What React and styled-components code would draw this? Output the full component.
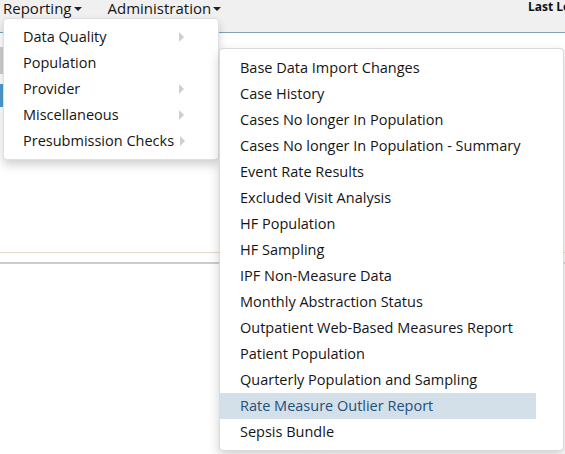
import styled, { createGlobalStyle } from 'styled-components';

const GlobalStyle = createGlobalStyle`
  html, body {
    margin: 0;
    padding: 0;
    background: #ffffff;
    font-family: 'Open Sans', 'Noto Sans', sans-serif;
    color: #151515;
  }
  * {
    box-sizing: border-box;
  }
`;

const Page = styled.div`
  width: 565px;
  height: 454px;
  overflow: hidden;
  position: relative;
`;

const NavBar = styled.div`
  height: 33px;
  background: #f0f0f0;
  border-bottom: 1px solid #7fa3ba;
  display: flex;
  align-items: flex-start;
  padding-left: 3px;
`;

const NavItem = styled.div`
  position: relative;
  font-size: 15px;
  line-height: 16px;
  color: #151515;
  display: flex;
  align-items: center;
  margin-right: ${(props) => props.$gap || 0}px;
`;

const DownCaret = styled.span`
  display: inline-block;
  width: 0;
  height: 0;
  margin-left: 2px;
  margin-top: 2px;
  border-top: 4px solid #222;
  border-left: 4px solid transparent;
  border-right: 4px solid transparent;
`;

// the label runs past the window edge, like in the real app
const LastLogin = styled.div`
  margin-left: auto;
  width: 37px;
  font-size: 12px;
  font-weight: 700;
  line-height: 13px;
  white-space: nowrap;
  color: #111;
`;

const Content = styled.div`
  padding-top: 14px;
`;

const TabStrip = styled.div`
  width: 200px;
  height: 27px;
  background: #cfcfcf;
`;

const SelectedTab = styled.div`
  width: 200px;
  height: 23px;
  margin-top: 10px;
  background: #4b9ad3;
`;

const Rule = styled.div`
  width: 565px;
  height: ${(props) => props.$h}px;
  background: ${(props) => props.$color};
  margin-top: ${(props) => props.$top}px;
`;

const Dropdown = styled.div`
  position: absolute;
  top: 18px;
  left: 0;
  width: 216px;
  padding: 5px 0;
  background: #fff;
  border: 1px solid rgba(0, 0, 0, 0.12);
  border-radius: 4px;
  box-shadow: 0 5px 10px rgba(0, 0, 0, 0.18);
  z-index: 10;
`;

const MenuRow = styled.div`
  height: 26px;
  display: flex;
  align-items: center;
  padding-left: ${(props) => props.$pad || 19}px;
  font-size: 14.5px;
  white-space: nowrap;
  color: ${(props) => (props.$active ? '#234f7b' : '#151515')};
  background: ${(props) => (props.$active ? '#d4e0e9' : 'transparent')};
  width: ${(props) => props.$width || 'auto'};
`;

const RightCaret = styled.span`
  display: inline-block;
  width: 0;
  height: 0;
  border-left: 5px solid #cfcfcf;
  border-top: 5px solid transparent;
  border-bottom: 5px solid transparent;
  margin-left: ${(props) => (props.$tight ? '6px' : 'auto')};
  margin-right: ${(props) => (props.$tight ? '0' : '34px')};
`;

const SubMenu = styled.div`
  position: absolute;
  top: 29px;
  left: 215px;
  width: 345px;
  height: 403px;
  padding: 6px 0 5px;
  background: #fff;
  border: 1px solid rgba(0, 0, 0, 0.15);
  border-radius: 4px;
  box-shadow: 0 5px 12px rgba(0, 0, 0, 0.18);
  z-index: 11;
`;

const reportingItems = [
  { label: 'Data Quality', sub: true },
  { label: 'Population', sub: false },
  { label: 'Provider', sub: true },
  { label: 'Miscellaneous', sub: true },
  { label: 'Presubmission Checks', sub: true, tight: true },
];

const populationReports = [
  'Base Data Import Changes',
  'Case History',
  'Cases No longer In Population',
  'Cases No longer In Population - Summary',
  'Event Rate Results',
  'Excluded Visit Analysis',
  'HF Population',
  'HF Sampling',
  'IPF Non-Measure Data',
  'Monthly Abstraction Status',
  'Outpatient Web-Based Measures Report',
  'Patient Population',
  'Quarterly Population and Sampling',
  'Rate Measure Outlier Report',
  'Sepsis Bundle',
];

export default function App() {
  return (
    <Page>
      <GlobalStyle />
      <NavBar>
        <NavItem $gap={26}>
          Reporting
          <DownCaret />
          <Dropdown>
            {reportingItems.map((item) => (
              <MenuRow key={item.label}>
                {item.label}
                {item.sub && <RightCaret $tight={item.tight} />}
              </MenuRow>
            ))}
            <SubMenu>
              {populationReports.map((name) => (
                <MenuRow
                  key={name}
                  $pad={20}
                  $width="316px"
                  $active={name === 'Rate Measure Outlier Report'}
                >
                  {name}
                </MenuRow>
              ))}
            </SubMenu>
          </Dropdown>
        </NavItem>
        <NavItem>
          Administration
          <DownCaret />
        </NavItem>
        <LastLogin>Last Login</LastLogin>
      </NavBar>
      <Content>
        <TabStrip />
        <SelectedTab />
        <Rule $h={1} $color="#e4dbc9" $top={145} />
        <Rule $h={2} $color="#cccccc" $top={9} />
      </Content>
    </Page>
  );
}
